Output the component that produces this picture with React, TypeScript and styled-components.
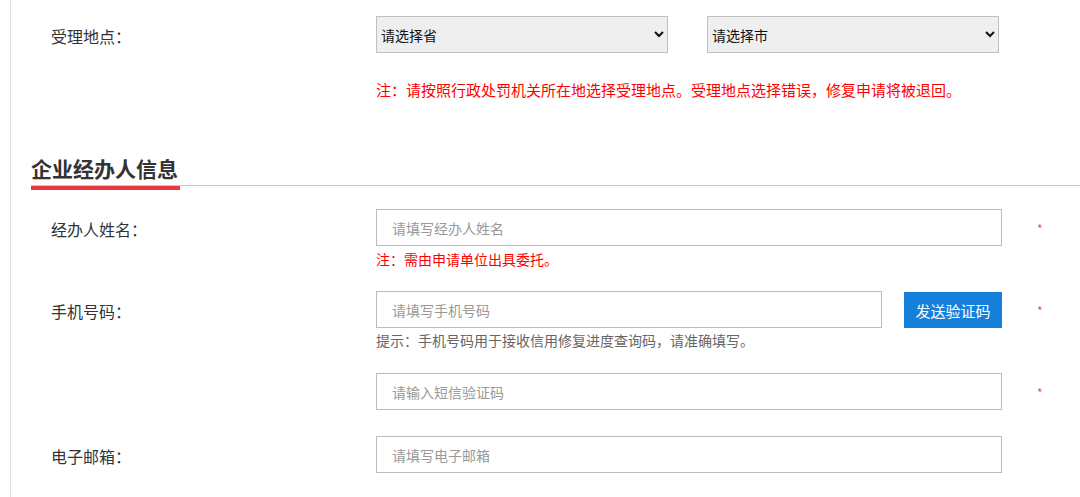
import styled, { createGlobalStyle } from 'styled-components';

const GlobalStyle = createGlobalStyle`
	html, body {
		margin: 0;
		padding: 0;
		background: #fff;
	}
	body {
		font-family: 'Noto Sans CJK SC', 'Noto Sans', sans-serif;
		color: #333;
	}
`;

const Page = styled.div`
	margin-left: 10px;
	border-left: 1px solid #ddd;
	min-height: 497px;
	padding-top: 16px;
	box-sizing: border-box;
	overflow: hidden;
`;

const Row = styled.div<{ $top?: number }>`
	display: grid;
	grid-template-columns: 325px 626px 1fr;
	align-items: center;
	padding-left: 40px;
	margin-top: ${(p) => p.$top ?? 0}px;
`;

const Label = styled.div`
	font-size: 16px;
	line-height: 22px;
	color: #333;
	padding-top: 3px;
`;

const Star = styled.span`
	font-size: 12px;
	line-height: 12px;
	color: #f05050;
	padding-left: 35px;
	padding-top: 2px;
`;

const SelectGroup = styled.div`
	display: flex;
	gap: 39px;
`;

const Select = styled.select`
	width: 292px;
	height: 37px;
	box-sizing: border-box;
	padding: 0;
	font-family: 'Noto Sans CJK SC', sans-serif;
	font-size: 14px;
	color: #111;
	background: #efefef;
	border: 1px solid #c0c0c0;
	border-radius: 0;
	outline: none;
`;

const Note = styled.div<{ $size?: number; $tone?: 'red' | 'gray' }>`
	grid-column: 2 / 4;
	font-size: ${(p) => p.$size ?? 14}px;
	line-height: 20px;
	color: ${(p) => (p.$tone === 'gray' ? '#666' : '#f00')};
	white-space: nowrap;
`;

const Section = styled.div`
	margin: 54px 0 0 20px;
	border-bottom: 1px solid #c8c8c8;
	padding-bottom: 3px;
`;

const SectionTitle = styled.h3`
	position: relative;
	display: inline-block;
	margin: 0;
	font-size: 21px;
	line-height: 28px;
	font-weight: 700;
	color: #333;

	&::after {
		content: '';
		position: absolute;
		left: 0;
		right: -2px;
		top: calc(100% + 4px);
		height: 4px;
		background: #e8383d;
	}
`;

const Field = styled.div`
	display: flex;
	gap: 22px;
`;

const Input = styled.input`
	flex: 1;
	min-width: 0;
	height: 37px;
	box-sizing: border-box;
	padding: 0 15px;
	font-family: 'Noto Sans CJK SC', sans-serif;
	font-size: 14px;
	color: #333;
	background: #fff;
	border: 1px solid #bcbcbc;
	outline: none;

	&::placeholder {
		color: #999;
	}
`;

const SendButton = styled.button`
	width: 98px;
	height: 36px;
	margin-top: 1px;
	border: 0;
	background: #1580d9;
	color: #fff;
	font-family: 'Noto Sans CJK SC', sans-serif;
	font-size: 15px;
	cursor: pointer;
`;

const Spacer = styled.div``;

const App = () => {
	return (
		<>
			<GlobalStyle />
			<Page>
				<Row>
					<Label>受理地点：</Label>
					<SelectGroup>
						<Select defaultValue=''>
							<option value=''>请选择省</option>
						</Select>
						<Select defaultValue=''>
							<option value=''>请选择市</option>
						</Select>
					</SelectGroup>
				</Row>
				<Row $top={27}>
					<Spacer />
					<Note $size={15}>
						注：请按照行政处罚机关所在地选择受理地点。受理地点选择错误，修复申请将被退回。
					</Note>
				</Row>

				<Section>
					<SectionTitle>企业经办人信息</SectionTitle>
				</Section>

				<Row $top={23}>
					<Label>经办人姓名：</Label>
					<Field>
						<Input placeholder='请填写经办人姓名' />
					</Field>
					<Star>*</Star>
				</Row>
				<Row $top={3}>
					<Spacer />
					<Note>注：需由申请单位出具委托。</Note>
				</Row>

				<Row $top={22}>
					<Label>手机号码：</Label>
					<Field>
						<Input placeholder='请填写手机号码' />
						<SendButton>发送验证码</SendButton>
					</Field>
					<Star>*</Star>
				</Row>
				<Row $top={2}>
					<Spacer />
					<Note $tone='gray'>
						提示：手机号码用于接收信用修复进度查询码，请准确填写。
					</Note>
				</Row>

				<Row $top={23}>
					<Spacer />
					<Field>
						<Input placeholder='请输入短信验证码' />
					</Field>
					<Star>*</Star>
				</Row>

				<Row $top={26}>
					<Label>电子邮箱：</Label>
					<Field>
						<Input placeholder='请填写电子邮箱' />
					</Field>
				</Row>
			</Page>
		</>
	);
};

export default App;
